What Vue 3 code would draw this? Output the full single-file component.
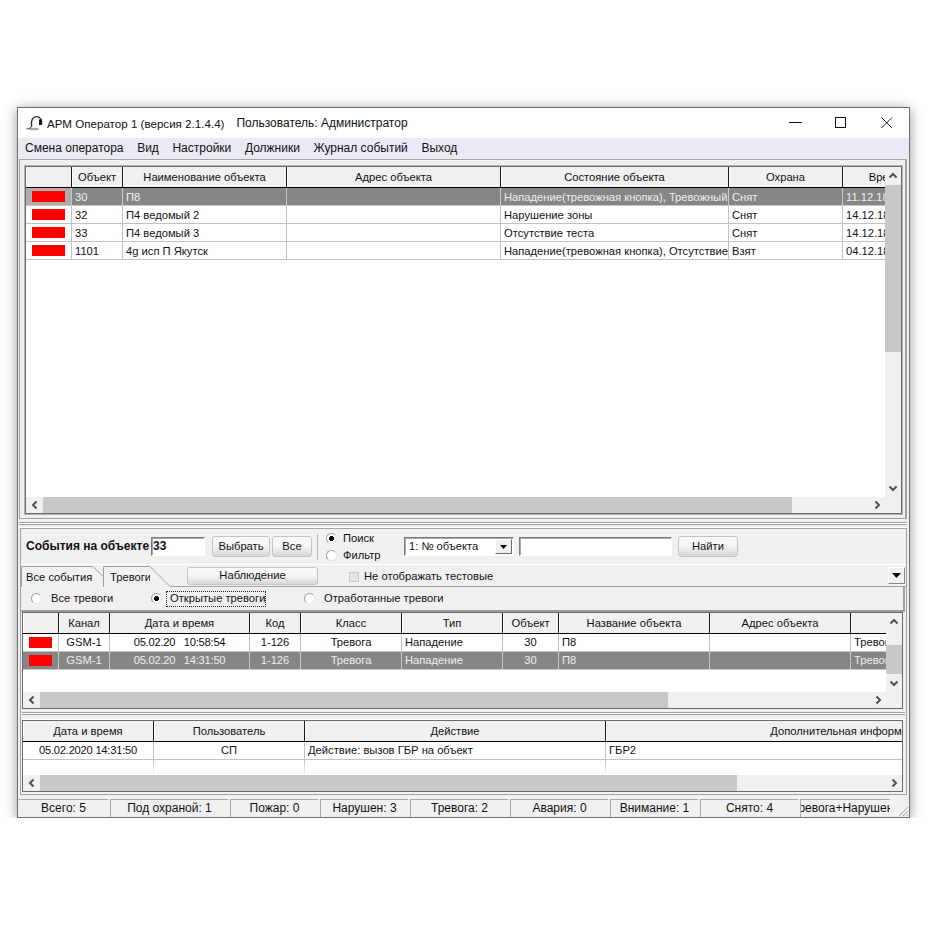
<script setup>
const menu = ['Смена оператора', 'Вид', 'Настройки', 'Должники', 'Журнал событий', 'Выход']

const topCols = [46, 51, 164, 214, 228, 114, 86]
const topHead = ['', 'Объект', 'Наименование объекта', 'Адрес объекта', 'Состояние объекта', 'Охрана', 'Время']
const topRows = [
  { sel: true, c: ['30', 'П8', '', 'Нападение(тревожная кнопка), Тревожный шлейф', 'Снят', '11.12.18 10:15'] },
  { sel: false, c: ['32', 'П4 ведомый 2', '', 'Нарушение зоны', 'Снят', '14.12.18 09:20'] },
  { sel: false, c: ['33', 'П4 ведомый 3', '', 'Отсутствие теста', 'Снят', '14.12.18 09:21'] },
  { sel: false, c: ['1101', '4g исп П Якутск', '', 'Нападение(тревожная кнопка), Отсутствие теста', 'Взят', '04.12.18 12:40'] }
]

const alarmCols = [36, 51, 140, 51, 101, 101, 56, 151, 141, 80]
const alarmHead = ['', 'Канал', 'Дата и время', 'Код', 'Класс', 'Тип', 'Объект', 'Название объекта', 'Адрес объекта', '']
const alarmAlign = ['', 'c', 'c tight', 'c', 'c', '', 'c', '', '', '']
const alarmRows = [
  { sel: false, c: ['GSM-1', '05.02.20\u00a0\u00a0\u00a010:58:54', '1-126', 'Тревога', 'Нападение', '30', 'П8', '', 'Тревога'] },
  { sel: true, c: ['GSM-1', '05.02.20\u00a0\u00a0\u00a014:31:50', '1-126', 'Тревога', 'Нападение', '30', 'П8', '', 'Тревога'] }
]

const logCols = [131, 151, 301, 486]
const logHead = ['Дата и время', 'Пользователь', 'Действие', 'Дополнительная информация']
const logRow = ['05.02.2020 14:31:50', 'СП', 'Действие: вызов ГБР на объект', 'ГБР2']
const logAlign = ['c tight', 'c', '', '']

const tracks = cols => ({ gridTemplateColumns: cols.map(w => w + 'px').join(' ') })

const status = [
  { t: 'Всего: 5', w: 90 },
  { t: 'Под охраной: 1', w: 118 },
  { t: 'Пожар: 0', w: 88 },
  { t: 'Нарушен: 3', w: 88 },
  { t: 'Тревога: 2', w: 98 },
  { t: 'Авария: 0', w: 98 },
  { t: 'Внимание: 1', w: 88 },
  { t: 'Снято: 4', w: 98 }
]
</script>

<template>
  <div class="window">
    <header class="title">
      <svg class="app-icon" width="17" height="18" viewBox="0 0 17 18">
        <ellipse cx="8" cy="14" rx="5" ry="1.3" fill="#a8a8a8" />
        <path d="M5.6 11.5 C4.5 5 7 1.6 10.6 1.6 C14.2 1.6 16 5 15.6 8.6" fill="none" stroke="#2a2a2a" stroke-width="1.3" />
        <path d="M13 4.5 h3 v5.5 h-3 z" fill="#111" />
        <path d="M5.8 10 C5.8 12.5 3.5 14 .5 14" fill="none" stroke="#333" />
      </svg>
      <span class="title-a">АРМ Оператор 1 (версия 2.1.4.4)</span>
      <span class="title-b">Пользователь: Администратор</span>
      <div class="win-btns">
        <svg width="46" height="30" viewBox="0 0 46 30"><path d="M18 14.5 h13" stroke="#111" /></svg>
        <svg width="46" height="30" viewBox="0 0 46 30"><rect x="18.5" y="9.5" width="10" height="10" fill="none" stroke="#111" /></svg>
        <svg width="46" height="30" viewBox="0 0 46 30"><path d="M18.5 9.5 l10.5 10.5 M29 9.5 l-10.5 10.5" stroke="#222" fill="none" /></svg>
      </div>
    </header>

    <nav class="menu">
      <span v-for="m in menu" :key="m">{{ m }}</span>
    </nav>

    <section class="frame-top">
      <div class="grid grid-top">
        <div class="grid-main">
          <div class="grid-body">
            <div class="row head" :style="tracks(topCols)">
              <div v-for="(h, i) in topHead" :key="i" class="cell c">{{ h }}</div>
            </div>
            <div v-for="r in topRows" :key="r.c[0]" class="row" :class="{ sel: r.sel }" :style="tracks(topCols)">
              <div class="cell mark"><i class="flag flag-wide"></i></div>
              <div v-for="(v, i) in r.c" :key="i" class="cell">{{ v }}</div>
            </div>
          </div>
          <div class="vscroll">
            <div class="arrow-v"><svg class="chev" viewBox="0 0 10 10"><path d="M1.5 6.5 L5 3 L8.5 6.5" /></svg></div>
            <div class="v-track"><div class="v-thumb vt-top"></div></div>
            <div class="arrow-v"><svg class="chev" viewBox="0 0 10 10"><path d="M1.5 3.5 L5 7 L8.5 3.5" /></svg></div>
          </div>
        </div>
        <div class="hscroll">
          <div class="arrow-h"><svg class="chev" viewBox="0 0 10 10"><path d="M6.5 1.5 L3 5 L6.5 8.5" /></svg></div>
          <div class="h-track"><div class="h-thumb ht-top"></div></div>
          <div class="arrow-h"><svg class="chev" viewBox="0 0 10 10"><path d="M3.5 1.5 L7 5 L3.5 8.5" /></svg></div>
          <div class="corner"></div>
        </div>
      </div>
    </section>

    <div class="splitter"></div>

    <section class="frame-bottom">
      <div class="toolbar">
        <b class="tb-label">События на объекте</b>
        <div class="input input-obj">33</div>
        <button class="btn btn-select">Выбрать</button>
        <button class="btn btn-all">Все</button>
        <div class="tb-sep"></div>
        <div class="radio-stack">
          <label class="radio-line"><i class="radio on"></i>Поиск</label>
          <label class="radio-line"><i class="radio"></i>Фильтр</label>
        </div>
        <div class="input combo">
          <span>1: № объекта</span>
          <span class="combo-btn"><svg width="7" height="4" viewBox="0 0 7 4"><path d="M0 0 h7 L3.5 4 z" fill="#000" /></svg></span>
        </div>
        <div class="input input-find"></div>
        <button class="btn btn-find">Найти</button>
      </div>

      <div class="tabs">
        <div class="tab tab-first">
          <span class="tab-label">Все события</span>
          <svg width="10" height="21" viewBox="0 0 10 21"><path d="M0 .5 L10 10.5" stroke="#a0a0a0" fill="none" /></svg>
        </div>
        <div class="tab tab-active">
          <span class="tab-label">Тревоги</span>
          <svg width="20" height="22" viewBox="0 0 20 22"><path d="M0 0 L20 20 V22 H0 z" fill="#f0f0f0" /><path d="M0 .5 L20 20.5" stroke="#a0a0a0" fill="none" /></svg>
        </div>
        <div class="tab-rest">
          <button class="btn btn-watch">Наблюдение</button>
          <label class="check"><i class="checkbox"></i>Не отображать тестовые</label>
          <span class="drop"><svg width="9" height="5" viewBox="0 0 9 5"><path d="M0 0 h9 L4.5 5 z" fill="#000" /></svg></span>
        </div>
      </div>

      <div class="radio-bar">
        <label class="rb rb-1"><i class="radio"></i><span>Все тревоги</span></label>
        <label class="rb rb-2"><i class="radio on"></i><span class="focus">Открытые тревоги</span></label>
        <label class="rb rb-3"><i class="radio"></i><span>Отработанные тревоги</span></label>
      </div>

      <div class="grid grid-alarm">
        <div class="grid-main">
          <div class="grid-body">
            <div class="row head" :style="tracks(alarmCols)">
              <div v-for="(h, i) in alarmHead" :key="i" class="cell c">{{ h }}</div>
            </div>
            <div v-for="(r, n) in alarmRows" :key="n" class="row" :class="{ sel: r.sel }" :style="tracks(alarmCols)">
              <div class="cell mark"><i class="flag flag-narrow"></i></div>
              <div v-for="(v, i) in r.c" :key="i" class="cell" :class="alarmAlign[i + 1]">{{ v }}</div>
            </div>
          </div>
          <div class="vscroll">
            <div class="arrow-v"><svg class="chev" viewBox="0 0 10 10"><path d="M1.5 6.5 L5 3 L8.5 6.5" /></svg></div>
            <div class="v-track"><div class="v-thumb vt-alarm"></div></div>
            <div class="arrow-v"><svg class="chev" viewBox="0 0 10 10"><path d="M1.5 3.5 L5 7 L8.5 3.5" /></svg></div>
          </div>
        </div>
        <div class="hscroll">
          <div class="arrow-h"><svg class="chev" viewBox="0 0 10 10"><path d="M6.5 1.5 L3 5 L6.5 8.5" /></svg></div>
          <div class="h-track"><div class="h-thumb ht-alarm"></div></div>
          <div class="arrow-h"><svg class="chev" viewBox="0 0 10 10"><path d="M3.5 1.5 L7 5 L3.5 8.5" /></svg></div>
          <div class="corner"></div>
        </div>
      </div>

      <div class="splitter splitter-inner"></div>

      <div class="grid grid-log">
        <div class="grid-body">
          <div class="row head" :style="tracks(logCols)">
            <div v-for="h in logHead" :key="h" class="cell c">{{ h }}</div>
          </div>
          <div class="row" :style="tracks(logCols)">
            <div v-for="(v, i) in logRow" :key="i" class="cell" :class="logAlign[i]">{{ v }}</div>
          </div>
          <div class="row row-fade" :style="tracks(logCols)">
            <div v-for="h in logHead" :key="h" class="cell"></div>
          </div>
        </div>
        <div class="hscroll">
          <div class="arrow-h"><svg class="chev" viewBox="0 0 10 10"><path d="M6.5 1.5 L3 5 L6.5 8.5" /></svg></div>
          <div class="h-track"><div class="h-thumb ht-log"></div></div>
          <div class="arrow-h"><svg class="chev" viewBox="0 0 10 10"><path d="M3.5 1.5 L7 5 L3.5 8.5" /></svg></div>
        </div>
      </div>
    </section>

    <footer class="status">
      <div v-for="s in status" :key="s.t" class="st" :style="{ width: s.w + 'px' }">{{ s.t }}</div>
      <div class="st st-last"><span>Тревога+Нарушен</span></div>
      <svg class="grip" width="12" height="12" viewBox="0 0 12 12"><path d="M11 2 L2 11 M11 6 L6 11 M11 9.5 L9.5 11" stroke="#a8a8a8" fill="none" /></svg>
    </footer>
  </div>
</template>

<style scoped>
* { box-sizing: border-box; }
.window {
  width: 893px;
  height: 711px;
  margin: 107px 0 0 17px;
  border: 1px solid #6f6f6f;
  background: #f0f0f0;
  box-shadow: 0 2px 12px rgba(0, 0, 0, .42);
  font: 11.2px/17px "Liberation Sans", Arial, sans-serif;
  color: #111;
  overflow: hidden;
  display: flex;
  flex-direction: column;
}
.title {
  height: 30px;
  flex: none;
  background: #fff;
  display: flex;
  align-items: center;
  padding: 1px 0 0 8px;
  font-size: 12px;
}
.app-icon { flex: none; margin: 0 4px 0 0; }
.title-a { margin-right: 12px; font-size: 11.6px; }
.win-btns { margin: -1px 0 0 auto; display: flex; }
.win-btns svg { display: block; }
.menu {
  height: 20px;
  flex: none;
  background: #eaeaf4;
  display: flex;
  align-items: center;
  gap: 13.6px;
  padding: 1px 0 0 7px;
  font-size: 12px;
}
.frame-top {
  height: 360px;
  flex: none;
  margin: 1px 2px 0 1px;
  border: 1px solid #a2a2a2;
  border-right-width: 2px;
  padding: 6px 4px 4px 5px;
}
.grid {
  border: 1px solid #6b6b6b;
  background: #fff;
  overflow: hidden;
  display: flex;
  flex-direction: column;
}
.grid-top { height: 348px; width: 877px; box-shadow: 0 0 0 1px #b4b4b4; }
.grid-main { flex: 1; min-height: 0; display: flex; }
.grid-body { flex: 1; min-width: 0; overflow: hidden; background: #fff; }
.row { display: grid; height: 18px; width: max-content; }
.row .cell {
  border-right: 1px solid #c2c2c2;
  border-bottom: 1px solid #c2c2c2;
  padding: 0 3px;
  white-space: nowrap;
  overflow: hidden;
  line-height: 17px;
}
.row .cell.c { text-align: center; padding: 0; }
.row .cell.tight { letter-spacing: -.25px; }
.row.head { height: 21px; background: #f0f0f0; border-bottom: 1px solid #000; }
.row.head .cell {
  border-bottom: 0;
  border-right: 1px solid #1a1a1a;
  line-height: 20px;
  background: #f0f0f0;
  box-shadow: inset 1px 0 0 #fff;
}
.grid-top .row .cell { line-height: 19px; }
.grid-top .row.head .cell { line-height: 21px; }
.row.sel { background: #868686; color: #eee; }
.row.sel .cell { border-color: #c8c8c8; }
.grid-top .row.sel .mark { background: #adadad; }
.row .cell.mark { display: flex; align-items: center; padding: 0 0 0 6px; }
.flag { display: block; background: #f00; height: 11px; }
.flag-wide { width: 33px; margin-top: -1px; }
.flag-narrow { width: 23px; margin-top: -1px; }
.vscroll { width: 16px; flex: none; background: #f0f0f0; display: flex; flex-direction: column; }
.arrow-v { height: 18px; flex: none; display: flex; align-items: center; justify-content: center; }
.v-track { flex: 1; }
.v-thumb { background: #c8c8c8; }
.vt-top { height: 167px; }
.vt-alarm { height: 29px; margin-top: 14px; }
.hscroll { height: 16px; flex: none; background: #f0f0f0; display: flex; }
.arrow-h { width: 17px; flex: none; display: flex; align-items: center; justify-content: center; }
.h-track { flex: 1; }
.h-thumb { height: 100%; background: #c8c8c8; }
.ht-top { width: 749px; }
.ht-alarm { width: 628px; }
.ht-log { width: 697px; }
.corner { width: 16px; flex: none; }
.chev { width: 10px; height: 10px; display: block; fill: none; stroke: #505050; stroke-width: 2; }
.splitter {
  height: 9px;
  flex: none;
  border-bottom: 1px solid #fff;
  background: linear-gradient(#f0f0f0 3px, #a0a0a0 3px, #a0a0a0 4px, #fff 4px, #fff 5px, #a0a0a0 5px, #a0a0a0 6px, #f0f0f0 6px);
  margin: 0 2px 0 1px;
}
.frame-bottom {
  height: 267px;
  flex: none;
  margin: 0 2px;
  border: 1px solid #a2a2a2;
  display: flex;
  flex-direction: column;
}
.toolbar {
  height: 36px;
  flex: none;
  border-bottom: 1px solid #fff;
  display: flex;
  align-items: center;
  padding-left: 5px;
}
.tb-label { font-weight: 700; font-size: 12px; width: 125px; flex: none; white-space: nowrap; }
.input {
  height: 19px;
  background: #fff;
  border: 1px solid;
  border-color: #7b7b7b #fff #fff #7b7b7b;
  box-shadow: inset 1px 1px 0 #a8a8a8;
  flex: none;
}
.input-obj { width: 54px; font-weight: 700; font-size: 12px; padding-left: 1px; line-height: 16px; }
.btn {
  font: inherit;
  color: #111;
  padding: 0;
  height: 21px;
  flex: none;
  border: 1px solid #c4c4c4;
  border-radius: 3px;
  background: linear-gradient(#fafafa, #f4f4f4 50%, #d6d6d6);
  line-height: 17px;
}
.btn-select { width: 58px; margin-left: 7px; }
.btn-all { width: 40px; margin-left: 2px; }
.tb-sep { width: 1px; height: 26px; background: #b4b4b4; margin-left: 5px; flex: none; }
.radio-stack { width: 78px; margin-left: 8px; flex: none; display: flex; flex-direction: column; }
.radio-line { display: flex; align-items: center; height: 17px; gap: 6px; }
.radio {
  display: block;
  width: 11px;
  height: 11px;
  flex: none;
  border-radius: 50%;
  background: #fff;
  border: 1px solid #a0a0a0;
  border-right-color: #e6e6e6;
  border-bottom-color: #e6e6e6;
}
.radio.on { background: radial-gradient(circle, #000 2.2px, #fff 2.8px); }
.combo { width: 110px; display: flex; align-items: center; justify-content: space-between; padding: 0 1px 0 4px; white-space: nowrap; }
.combo-btn {
  width: 17px;
  height: 15px;
  background: #f0f0f0;
  border: 1px solid;
  border-color: #fff #6a6a6a #6a6a6a #fff;
  display: flex;
  align-items: center;
  justify-content: center;
}
.input-find { width: 153px; margin-left: 5px; }
.btn-find { width: 60px; margin-left: 6px; }
.tabs { height: 22px; flex: none; display: flex; padding-top: 1px; }
.tab { display: flex; align-items: stretch; flex: none; }
.tab-label { border: 1px solid #a0a0a0; border-width: 1px 0 0 1px; border-radius: 2px 0 0 0; padding: 2px 0 0 4px; white-space: nowrap; height: 21px; }
.tab-first { width: 82px; }
.tab-first .tab-label { width: 72px; }
.tab-active { width: 67px; }
.tab-active .tab-label { width: 47px; padding-left: 6px; }
.tab-rest {
  flex: 1;
  min-width: 0;
  display: flex;
  align-items: flex-start;
  border-bottom: 1px solid #a0a0a0;
}
.btn-watch { width: 131px; height: 18px; margin: 1px 0 0 17px; line-height: 14px; padding-bottom: 2px; }
.check { display: flex; align-items: center; gap: 5px; margin: 2px 0 0 31px; }
.checkbox { display: block; width: 10px; height: 10px; background: #e3e3e3; border: 1px solid #c8c8c8; flex: none; }
.drop {
  width: 17px;
  height: 17px;
  margin: 1px 1px 0 auto;
  background: #f0f0f0;
  border: 1px solid;
  border-color: #fff #888 #888 #fff;
  display: flex;
  align-items: center;
  justify-content: center;
}
.radio-bar {
  height: 25px;
  flex: none;
  margin-right: 1px;
  border-right: 2px solid #a0a0a0;
  border-bottom: 2px solid #9c9c9c;
  display: flex;
  align-items: center;
  padding-left: 10px;
}
.rb { display: flex; align-items: center; flex: none; }
.rb .radio { margin-right: 4px; }
.rb span { padding: 0 0 0 5px; white-space: nowrap; }
.rb-1 { width: 120px; }
.rb-2 { width: 153px; }
.rb .focus { outline: 1px dotted #222; outline-offset: -1px; width: 100px; height: 16px; line-height: 15px; padding: 0 0 0 4px; overflow: hidden; }
.grid-alarm { height: 97px; width: 881px; margin-left: 1px; flex: none; }
.splitter-inner { margin: 0 1px; height: 11px; }
.grid-log { height: 72px; width: 881px; margin-left: 1px; flex: none; }
.grid-log .grid-body { flex: 1; }
.row-fade { height: 16px; }
.row-fade .cell { border: 0 !important; background: linear-gradient(#c2c2c2, #fff) no-repeat right top / 1px 100%; }
.status {
  flex: 1;
  display: flex;
  align-items: flex-end;
  font-size: 12px;
}
.st {
  flex: none;
  height: 18px;
  text-align: center;
  white-space: nowrap;
  line-height: 17px;
  border-top: 1px solid #a8a8a8;
  border-left: 1px solid #a8a8a8;
  margin-right: 2px;
  overflow: hidden;
}
.st:first-child { border-left-color: transparent; }
.st-last { width: 90px; padding-right: 6px; margin-right: 0; display: flex; justify-content: center; }
.st-last span { flex: none; }
.grip { flex: none; margin-left: auto; }
</style>

<style>
html, body { margin: 0; background: #fff; }
</style>
